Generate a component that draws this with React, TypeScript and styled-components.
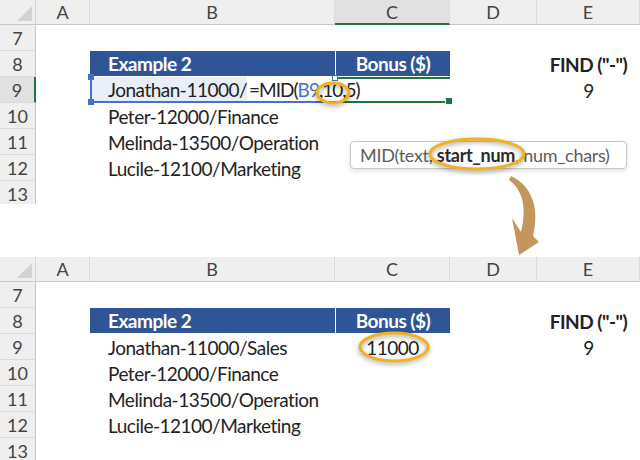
import React from "react";
import styled, { createGlobalStyle, css } from "styled-components";

const GlobalStyle = createGlobalStyle`
  html, body {
    margin: 0;
    padding: 0;
    background: #fff;
  }
  body {
    width: 640px;
    height: 460px;
    overflow: hidden;
    font-family: Lato, "Noto Sans", sans-serif;
  }
`;

const Page = styled.div`
  position: relative;
  width: 640px;
  height: 460px;
  display: flex;
  flex-direction: column;
  gap: 53px;
`;

const Sheet = styled.div<{ $height: number }>`
  position: relative;
  display: grid;
  grid-template-columns: 36px 54px 245px 115px 87px 103px;
  grid-template-rows: 25px repeat(7, 26px);
  height: ${(p) => p.$height}px;
  overflow: hidden;
  flex-shrink: 0;
`;

const Corner = styled.div`
  position: relative;
  background: #efefef;
  border-right: 1px solid #d4d4d4;
  border-bottom: 1px solid #c6c6c6;
  &::after {
    content: "";
    position: absolute;
    right: 3px;
    bottom: 3px;
    width: 0;
    height: 0;
    border-left: 15px solid transparent;
    border-bottom: 15px solid #d2d2d2;
  }
`;

const ColHead = styled.div<{ $active?: boolean }>`
  display: flex;
  align-items: center;
  justify-content: center;
  background: ${(p) => (p.$active ? "#e1e1e1" : "#efefef")};
  border-right: 1px solid #dadada;
  border-bottom: ${(p) => (p.$active ? "2px solid #217346" : "1px solid #c6c6c6")};
  font-size: 18px;
  color: #444;
`;

const RowHead = styled.div<{ $active?: boolean }>`
  display: flex;
  align-items: center;
  justify-content: center;
  background: ${(p) => (p.$active ? "#e1e1e1" : "#efefef")};
  border-right: ${(p) => (p.$active ? "2px solid #217346" : "1px solid #c6c6c6")};
  border-bottom: 1px solid #dadada;
  font-size: 18px;
  color: #444;
`;

const Cell = styled.div<{ $align?: "left" | "center"; $bold?: boolean; $header?: boolean }>`
  display: flex;
  align-items: center;
  justify-content: ${(p) => (p.$align === "center" ? "center" : "flex-start")};
  padding-left: ${(p) => (p.$align === "center" ? 0 : 18)}px;
  font-size: 19px;
  letter-spacing: -0.5px;
  font-weight: ${(p) => (p.$bold || p.$header ? 700 : 400)};
  color: #222;
  white-space: nowrap;
  ${(p) =>
    p.$header &&
    css`
      background: #2f5597;
      color: #fff;
      border-bottom: 1px solid #fff;
    `}
`;

const HeaderSplit = styled(Cell)`
  border-left: 1px solid #fff;
`;

const EditCell = styled.div`
  position: relative;
  display: flex;
  align-items: stretch;
  font-size: 19px;
  letter-spacing: -0.5px;
  color: #222;
  white-space: nowrap;
  border-left: 2px solid #4472c4;
  border-bottom: 2px solid #4472c4;
  z-index: 2;
  &::before,
  &::after {
    content: "";
    position: absolute;
    left: -4px;
    width: 6px;
    height: 6px;
    background: #4472c4;
  }
  &::before {
    top: -3px;
  }
  &::after {
    bottom: -4px;
  }
`;

const Typed = styled.span`
  display: flex;
  align-items: center;
  padding-left: 16px;
  background: #e9eff9;
`;

const Formula = styled.span`
  display: flex;
  align-items: center;
  padding-left: 2px;
  letter-spacing: -1px;
`;

const Ref = styled.span`
  color: #4472c4;
`;

const ActiveCell = styled.div`
  position: relative;
  border-top: 2px solid #217346;
  border-bottom: 2px solid #217346;
  &::before {
    content: "";
    position: absolute;
    left: -3px;
    top: -4px;
    width: 4px;
    height: 4px;
    background: #fff;
    border: 1px solid #4472c4;
    z-index: 3;
  }
  &::after {
    content: "";
    position: absolute;
    right: -3px;
    bottom: -4px;
    width: 6px;
    height: 6px;
    background: #217346;
    border: 1px solid #fff;
  }
`;

const Tooltip = styled.div`
  position: absolute;
  left: 350px;
  top: 141px;
  width: 277px;
  height: 28px;
  box-sizing: border-box;
  display: flex;
  align-items: center;
  padding-left: 9px;
  background: #fff;
  border: 1px solid #c8c8c8;
  border-radius: 4px;
  box-shadow: 0 2px 5px rgba(0, 0, 0, 0.12);
  font-size: 18px;
  letter-spacing: -0.3px;
  color: #5c5c5c;
  white-space: nowrap;
  z-index: 4;
  b {
    color: #2a2a2a;
    font-weight: 700;
  }
`;

const Ring = styled.svg<{ $x: number; $y: number }>`
  position: absolute;
  left: ${(p) => p.$x}px;
  top: ${(p) => p.$y}px;
  overflow: visible;
  pointer-events: none;
  z-index: 5;
  filter: drop-shadow(0 2px 2px rgba(0, 0, 0, 0.35));
`;

const ArrowSvg = styled.svg`
  position: absolute;
  left: 0;
  top: 0;
  width: 640px;
  height: 460px;
  pointer-events: none;
  z-index: 6;
`;

const GoldRing = ({ cx, cy, rx, ry }: { cx: number; cy: number; rx: number; ry: number }) => (
  <Ring $x={cx - rx - 2} $y={cy - ry - 2} width={rx * 2 + 4} height={ry * 2 + 4}>
    <ellipse cx={rx + 2} cy={ry + 2} rx={rx} ry={ry} fill="none" stroke="#f2b11f" strokeWidth="3" />
  </Ring>
);

const names: Record<number, string> = {
  10: "Peter-12000/Finance",
  11: "Melinda-13500/Operation",
  12: "Lucile-12100/Marketing",
};

const Spreadsheet = ({ editing, height }: { editing: boolean; height: number }) => {
  const rows = [7, 8, 9, 10, 11, 12, 13];
  return (
    <Sheet $height={height}>
      <Corner />
      <ColHead>A</ColHead>
      <ColHead>B</ColHead>
      <ColHead $active={editing}>C</ColHead>
      <ColHead>D</ColHead>
      <ColHead>E</ColHead>
      {rows.map((r) => (
        <React.Fragment key={r}>
          <RowHead $active={editing && r === 9}>{r}</RowHead>
          <Cell />
          {r === 8 ? (
            <>
              <Cell $header>Example 2</Cell>
              <HeaderSplit $header $align="center">
                Bonus ($)
              </HeaderSplit>
              <Cell />
              <Cell $align="center" $bold>
                FIND ("-")
              </Cell>
            </>
          ) : r === 9 ? (
            <>
              {editing ? (
                <EditCell>
                  <Typed>Jonathan-11000/</Typed>
                  <Formula>
                    =MID(<Ref>B9</Ref>,10,5)
                  </Formula>
                </EditCell>
              ) : (
                <Cell>Jonathan-11000/Sales</Cell>
              )}
              {editing ? <ActiveCell /> : <Cell $align="center">11000</Cell>}
              <Cell />
              <Cell $align="center">9</Cell>
            </>
          ) : (
            <>
              <Cell>{names[r] ?? ""}</Cell>
              <Cell />
              <Cell />
              <Cell />
            </>
          )}
        </React.Fragment>
      ))}
      {editing ? (
        <>
          <Tooltip>
            MID(text,&nbsp;<b>start_num</b>, num_chars)
          </Tooltip>
          <GoldRing cx={333} cy={93} rx={16} ry={10} />
          <GoldRing cx={477} cy={154} rx={47} ry={15} />
        </>
      ) : (
        <GoldRing cx={394} cy={90} rx={34} ry={14} />
      )}
    </Sheet>
  );
};

const App = () => (
  <Page>
    <GlobalStyle />
    <Spreadsheet editing height={204} />
    <Spreadsheet editing={false} height={203} />
    <ArrowSvg viewBox="0 0 640 460">
      <path
        d="M511 176 C528 184 541 203 533 236 L539 242 L519 255 L512 218 L521 232 C527 208 523 190 509 180 Z"
        fill="#c4955c"
      />
    </ArrowSvg>
  </Page>
);

export default App;
